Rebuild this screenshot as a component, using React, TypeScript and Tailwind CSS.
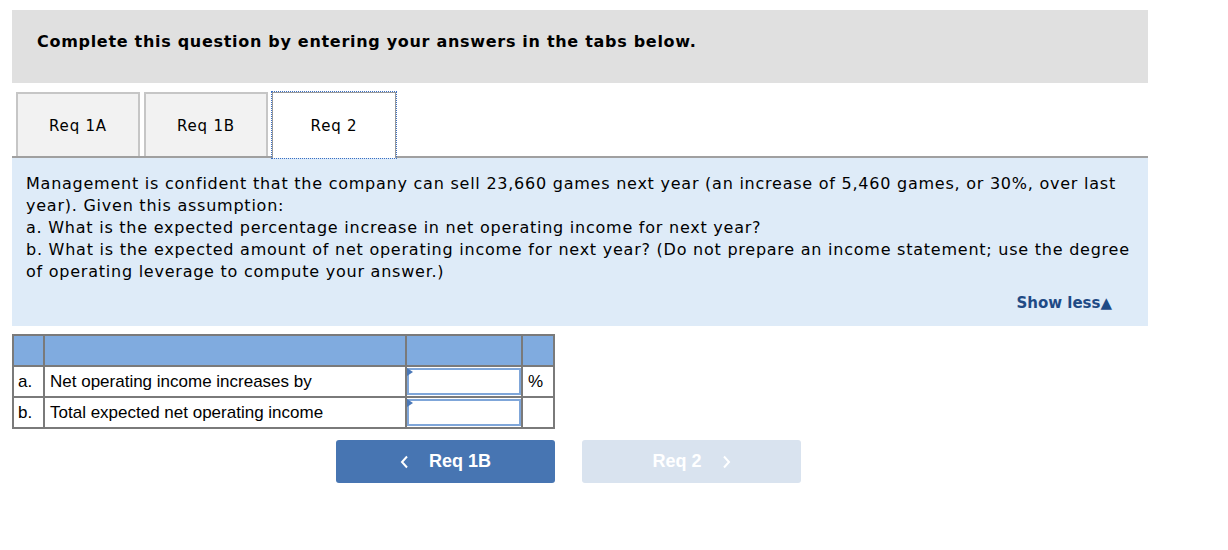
import React from 'react';

const tabs = ['Req 1A', 'Req 1B', 'Req 2'];

const rows = [
  { letter: 'a.', label: 'Net operating income increases by', unit: '%' },
  { letter: 'b.', label: 'Total expected net operating income', unit: '' },
];

const AnswerInput: React.FC = () => (
  <div className="relative h-[27px] w-full border-2 border-[#7fa6d9] bg-white">
    <span className="absolute -left-[2px] -top-[2px] h-0 w-0 border-y-[4px] border-l-[6px] border-y-transparent border-l-[#4a78b8]" />
  </div>
);

export default function App() {
  return (
    <div className="min-h-[550px] bg-white pl-3 pt-[10px] font-['DejaVu_Sans',Verdana,sans-serif] text-black">
      <div className="w-[1136px]">
        {/* Header */}
        <div className="h-[73px] bg-[#e0e0e0] pl-[25px] pt-[21px]">
          <h1 className="text-[16px] font-bold leading-[22px] tracking-[0.7px]">
            Complete this question by entering your answers in the tabs below.
          </h1>
        </div>

        {/* Tabs */}
        <div className="mt-[9px] flex items-end gap-[4px] border-b-2 border-[#a0a0a0] pl-[4px]">
          {tabs.map((t, i) => {
            const active = i === tabs.length - 1;
            return (
              <div
                key={t}
                className={
                  active
                    ? 'relative -mb-[2px] flex h-[66px] w-[124px] items-center justify-center border border-b-0 border-[#999] bg-white pt-[2px] text-[15px] tracking-[0.8px] outline-1 outline-dotted outline-[#3a6fc4]'
                    : 'flex h-[64px] w-[124px] items-center justify-center border-2 border-b-0 border-[#c6c6c6] bg-[#f2f2f2] pt-[2px] text-[15px] tracking-[0.8px]'
                }
              >
                {t}
              </div>
            );
          })}
        </div>

        {/* Question */}
        <div className="bg-[#deebf8] px-[14px] pb-[12px] pt-[15px] text-[16px] leading-[22px] tracking-[0.76px]">
          <p className="whitespace-nowrap">
            Management is confident that the company can sell 23,660 games next year (an increase of 5,460 games, or 30%, over last
            <br />
            year). Given this assumption:
          </p>
          <p className="whitespace-nowrap">a. What is the expected percentage increase in net operating income for next year?</p>
          <p className="whitespace-nowrap">
            b. What is the expected amount of net operating income for next year? (Do not prepare an income statement; use the degree
            <br />
            of operating leverage to compute your answer.)
          </p>
          <div className="mt-[9px] flex justify-end pr-[22px]">
            <span className="text-[15px] font-bold tracking-normal text-[#1f4a85]">Show less▲</span>
          </div>
        </div>

        {/* Table */}
        <table className="mt-[8px] border-collapse font-['Liberation_Sans',Arial,sans-serif] text-[17px]">
          <tbody>
            <tr className="h-[31px] bg-[#80abdf]">
              <td className="w-[31px] border-2 border-[#7a7a7a]" />
              <td className="w-[362px] border-2 border-[#7a7a7a]" />
              <td className="w-[116px] border-2 border-[#7a7a7a]" />
              <td className="w-[32px] border-2 border-[#7a7a7a]" />
            </tr>
            {rows.map((r) => (
              <tr key={r.letter} className="h-[31px] bg-white">
                <td className="border-2 border-[#7a7a7a] px-[4px] leading-[26px]">{r.letter}</td>
                <td className="border-2 border-[#7a7a7a] px-[5px] leading-[26px]">{r.label}</td>
                <td className="border-2 border-[#7a7a7a] p-0 align-middle">
                  <AnswerInput />
                </td>
                <td className="border-2 border-[#7a7a7a] px-[5px] leading-[26px]">{r.unit}</td>
              </tr>
            ))}
          </tbody>
        </table>

        {/* Navigation */}
        <div className="mt-[11px] flex gap-[27px] pl-[324px] font-['Liberation_Sans',Arial,sans-serif]">
          <button className="flex h-[43px] w-[219px] items-center justify-center gap-[20px] rounded-[3px] bg-[#4775b2] text-[18px] font-bold text-white">
            <svg width="9" height="14" viewBox="0 0 9 14" fill="none">
              <path d="M7 1.5 2 7l5 5.5" stroke="white" strokeWidth="2" />
            </svg>
            Req 1B
          </button>
          <button className="flex h-[43px] w-[219px] items-center justify-center gap-[20px] rounded-[3px] bg-[#d9e3ef] text-[18px] font-bold text-white">
            Req 2
            <svg width="9" height="14" viewBox="0 0 9 14" fill="none">
              <path d="M2 1.5 7 7l-5 5.5" stroke="white" strokeWidth="2" />
            </svg>
          </button>
        </div>
      </div>
    </div>
  );
}
